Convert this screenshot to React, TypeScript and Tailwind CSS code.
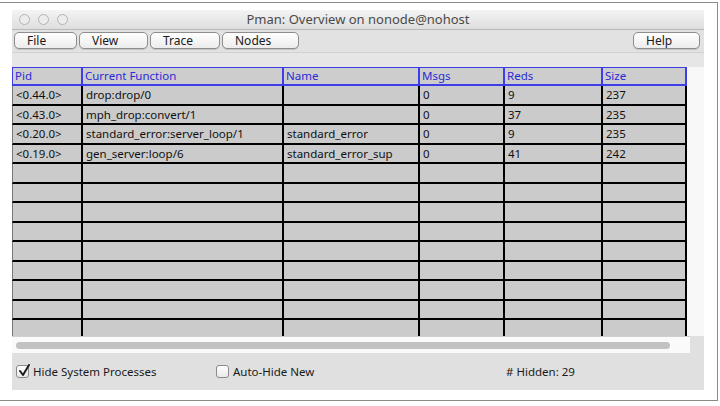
import React from "react";

const cols = ["Pid", "Current Function", "Name", "Msgs", "Reds", "Size"];

const rows: string[][] = [
  ["<0.44.0>", "drop:drop/0", "", "0", "9", "237"],
  ["<0.43.0>", "mph_drop:convert/1", "", "0", "37", "235"],
  ["<0.20.0>", "standard_error:server_loop/1", "standard_error", "0", "9", "235"],
  ["<0.19.0>", "gen_server:loop/6", "standard_error_sup", "0", "41", "242"],
];

const emptyRows = 9;

const MenuButton = ({ label, width }: { label: string; width: string }) => (
  <button
    className={`${width} h-[17px] rounded-[5px] border border-[#8d8d8d] bg-gradient-to-b from-[#ffffff] to-[#ececec] pl-3 text-left text-[12px] leading-[15px] text-[#1a1a1a] shadow-[0_1px_0_#c4c4c4]`}
  >
    {label}
  </button>
);

const Checkbox = ({ checked }: { checked?: boolean }) => (
  <span className="relative flex h-[13px] w-[13px] items-center justify-center rounded-[3px] border border-[#8a8a8a] bg-gradient-to-b from-white to-[#e9e9e9]">
    {checked && (
      <svg width="13" height="13" viewBox="0 0 13 13" className="absolute -top-[2px] left-[1px]">
        <path d="M2 7 L5 11 L11 1" fill="none" stroke="#1e1e1e" strokeWidth="2" strokeLinecap="round" strokeLinejoin="round" />
      </svg>
    )}
  </span>
);

const App = () => {
  const allRows = [...rows, ...Array.from({ length: emptyRows }, () => ["", "", "", "", "", ""])];

  return (
    <div
      className="h-[406px] w-[720px] overflow-hidden bg-white"
      style={{ fontFamily: '"Lucida Grande", "Noto Sans", "DejaVu Sans", sans-serif' }}
    >
      <div className="mt-[2px] h-[399px] w-[718px] border-t border-r border-b border-[#8a8a8a] pl-[12px] pt-[7px]">
        <div className="flex w-[692px] flex-col bg-[#e6e6e6]">
          {/* title bar */}
          <div className="relative flex h-[20px] items-center border-b border-[#b9b9b9] bg-gradient-to-b from-[#f4f4f4] to-[#dedede]">
            <div className="flex gap-[8px] pl-[7px]">
              <span className="h-[11px] w-[11px] rounded-full border border-[#b4b4b4] bg-[#ececec]" />
              <span className="h-[11px] w-[11px] rounded-full border border-[#b4b4b4] bg-[#ececec]" />
              <span className="h-[11px] w-[11px] rounded-full border border-[#b4b4b4] bg-[#ececec]" />
            </div>
            <div className="absolute inset-0 flex items-center justify-center text-[13px] text-[#4a4a4a]">
              Pman: Overview on nonode@nohost
            </div>
          </div>

          {/* toolbar */}
          <div className="flex h-[23px] items-start gap-[2px] border-b border-[#d2d2d2] bg-[#e2e2e2] pl-[2px] pt-[2px]">
            <MenuButton label="File" width="w-[63px]" />
            <MenuButton label="View" width="w-[69px]" />
            <MenuButton label="Trace" width="w-[70px]" />
            <MenuButton label="Nodes" width="w-[77px]" />
            <div className="flex-1" />
            <div className="flex pr-[4px]">
              <MenuButton label="Help" width="w-[67px]" />
            </div>
          </div>

          <div className="h-[14px] bg-[#e6e6e6]" />

          {/* table */}
          <div className="flex h-[269px] overflow-hidden">
            <div className="w-[675px] overflow-hidden bg-[#cbcbcb]">
              <div className="grid grid-cols-[71px_201px_136px_85px_98px_84px]">
                {cols.map((c, i) => (
                  <div
                    key={c}
                    className={`h-[19px] border-t border-r-2 border-b-2 border-[#3e3ee8] bg-[#cdcdcd] pl-[2px] text-[11.5px] leading-[16px] text-[#2b2bd6] ${
                      i === 0 ? "border-l" : ""
                    }`}
                  >
                    {c}
                  </div>
                ))}
                {allRows.map((r, ri) =>
                  r.map((v, ci) => (
                    <div
                      key={`${ri}-${ci}`}
                      className={`h-[19.5px] border-r-2 border-b-2 border-black bg-[#cbcbcb] pl-[3px] text-[11.5px] leading-[17px] text-[#111] ${
                        ci === 0 ? "border-l border-l-[#777]" : ""
                      }`}
                    >
                      {v}
                    </div>
                  ))
                )}
              </div>
            </div>
            <div className="flex-1 bg-[#f8f8f8]" />
          </div>

          {/* horizontal scrollbar */}
          <div className="flex h-[17px]">
            <div className="flex w-[678px] items-center border-t border-[#d0d0d0] bg-[#fafafa] pl-[4px] pr-[20px]">
              <div className="h-[7px] w-full rounded-full bg-[#c2c2c2]" />
            </div>
            <div className="flex-1 bg-[#e0e0e0]" />
          </div>

          {/* bottom panel */}
          <div className="flex h-[37px] items-center bg-[#e0e0e0] text-[11.5px] text-[#1a1a1a]">
            <div className="flex w-[200px] items-center gap-[4px] pl-[4px]">
              <Checkbox checked />
              <span>Hide System Processes</span>
            </div>
            <div className="flex w-[294px] items-center gap-[4px] pl-[4px]">
              <Checkbox />
              <span>Auto-Hide New</span>
            </div>
            <span>#&nbsp;Hidden: 29</span>
          </div>
        </div>
      </div>
    </div>
  );
};

export default App;
